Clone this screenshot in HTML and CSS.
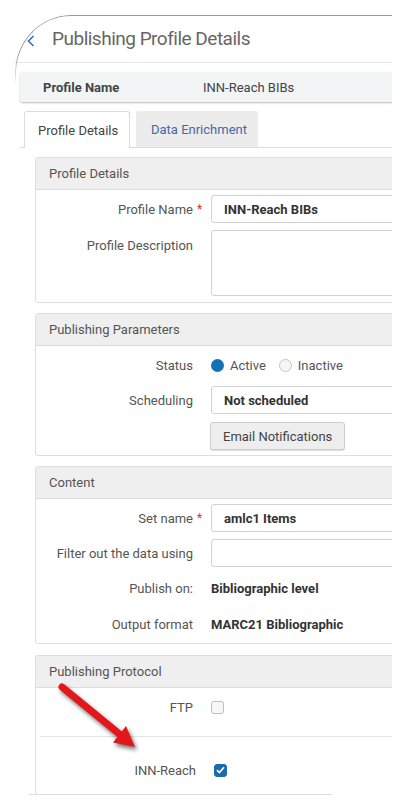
FILE: index.html
```html
<!DOCTYPE html>
<html lang="en">
<head>
<meta charset="utf-8">
<title>Publishing Profile Details</title>
<link rel="stylesheet" href="styles.css">
</head>
<body>
<div class="sheet">
  <header class="page-header">
    <svg class="back" width="8" height="12" viewBox="0 0 8 12"><path d="M6.5 1 L1.5 6 L6.5 11" fill="none" stroke="#2b72b8" stroke-width="1.6"/></svg>
    <h1 class="title">Publishing Profile Details</h1>
  </header>

  <div class="summary">
    <span class="summary-label">Profile Name</span>
    <span class="summary-value">INN-Reach BIBs</span>
  </div>

  <nav class="tabs">
    <span class="tab tab-active">Profile Details</span>
    <span class="tab tab-idle">Data Enrichment</span>
  </nav>

  <section class="panel">
    <div class="panel-head">Profile Details</div>
    <div class="panel-body">
      <div class="field">
        <span class="label">Profile Name</span><span class="req">*</span>
        <div class="input strong">INN-Reach BIBs</div>
      </div>
      <div class="field field-top">
        <span class="label">Profile Description</span><span class="req"></span>
        <div class="input textarea"></div>
      </div>
    </div>
  </section>

  <section class="panel">
    <div class="panel-head">Publishing Parameters</div>
    <div class="panel-body panel-body-params">
      <div class="field">
        <span class="label">Status</span><span class="req"></span>
        <div class="radios">
          <span class="radio radio-on"></span><span class="radio-text">Active</span>
          <span class="radio radio-off"></span><span class="radio-text">Inactive</span>
        </div>
      </div>
      <div class="field">
        <span class="label">Scheduling</span><span class="req"></span>
        <div class="input strong">Not scheduled</div>
      </div>
      <div class="field field-button">
        <span class="label"></span><span class="req"></span>
        <div><span class="button">Email Notifications</span></div>
      </div>
    </div>
  </section>

  <section class="panel">
    <div class="panel-head">Content</div>
    <div class="panel-body panel-body-content">
      <div class="field">
        <span class="label">Set name</span><span class="req">*</span>
        <div class="input strong">amlc1 Items</div>
      </div>
      <div class="field">
        <span class="label">Filter out the data using</span><span class="req"></span>
        <div class="input"></div>
      </div>
      <div class="field field-text">
        <span class="label">Publish on:</span><span class="req"></span>
        <span class="value">Bibliographic level</span>
      </div>
      <div class="field field-text">
        <span class="label">Output format</span><span class="req"></span>
        <span class="value">MARC21 Bibliographic</span>
      </div>
    </div>
  </section>

  <section class="panel panel-last">
    <div class="panel-head">Publishing Protocol</div>
    <div class="panel-body">
      <div class="field">
        <span class="label">FTP</span><span class="req"></span>
        <div><span class="check"></span></div>
      </div>
      <div class="separator"></div>
      <div class="field field-shift">
        <span class="label">INN-Reach</span><span class="req"></span>
        <div><span class="check check-on"><svg width="9" height="8" viewBox="0 0 9 8"><path d="M1 4.2 L3.4 6.5 L8 1.2" fill="none" stroke="#fff" stroke-width="1.6"/></svg></span></div>
      </div>
    </div>
  </section>

  <svg class="arrow" width="100" height="82" viewBox="0 0 100 82">
    <line x1="12" y1="9" x2="70" y2="56.5" stroke="#e3161b" stroke-width="7" stroke-linecap="round"/>
    <polygon points="85,69 63,64.5 76,48" fill="#e3161b"/>
  </svg>
</div>
</body>
</html>
```

FILE: styles.css
```css
* { box-sizing: border-box; }

html, body {
  margin: 0;
  padding: 0;
  background: #ffffff;
}

body {
  font-family: Roboto, "Liberation Sans", Arial, sans-serif;
  font-size: 13px;
  color: #555;
}

.sheet {
  position: relative;
  width: 392px;
  height: 795px;
  padding-top: 15px;
  overflow: hidden;
}

.sheet::before {
  content: "";
  position: absolute;
  left: 15px;
  top: 15px;
  width: 420px;
  height: 68px;
  border-top: 1px solid #9a9a9a;
  border-left: 1px solid #9a9a9a;
  border-top-left-radius: 56px 58px;
  -webkit-mask-image: linear-gradient(to bottom, #000 60%, transparent 100%);
  mask-image: linear-gradient(to bottom, #000 60%, transparent 100%);
  pointer-events: none;
}

.sheet::after {
  content: "";
  position: absolute;
  left: 29px;
  bottom: 0;
  width: 303px;
  height: 1px;
  background: #dcdcdc;
}

/* header */
.page-header {
  display: flex;
  align-items: center;
  height: 48px;
  margin-left: 15px;
  margin-right: -20px;
  padding-left: 12px;
  border-bottom: 1px solid #e8e8e8;
}

.back {
  display: block;
  margin-top: 4px;
}

.title {
  margin: 0 0 0 17px;
  font-weight: 400;
  font-size: 19px;
  color: #666;
  letter-spacing: -0.5px;
}

/* summary bar */
.summary {
  display: flex;
  align-items: center;
  height: 30px;
  margin: 9px -20px 0 20px;
  padding-left: 23px;
  background: #f2f5f6;
  border-radius: 3px;
  box-shadow: 0 1px 2px rgba(0, 0, 0, 0.28);
  color: #444;
}

.summary-label {
  width: 160px;
  font-weight: 700;
}

/* tabs */
.tabs {
  display: flex;
  gap: 6px;
  margin: 9px -20px 0 20px;
  padding-left: 4px;
  border-bottom: 1px solid #dcdcdc;
}

.tab {
  display: flex;
  align-items: center;
  height: 36px;
  border-radius: 3px 3px 0 0;
}

.tab-active {
  width: 106px;
  padding-left: 13px;
  background: #fff;
  border: 1px solid #dcdcdc;
  border-bottom: none;
  margin-bottom: -1px;
  height: 37px;
  color: #444;
}

.tab-idle {
  width: 122px;
  padding-left: 15px;
  background: #ececec;
  color: #4a66a6;
}

/* panels */
.panel {
  margin: 10px -40px 0 35px;
  border: 1px solid #dedede;
  border-radius: 3px;
  background: #fff;
}

.tabs + .panel {
  margin-top: 9px;
}

.panel-head {
  height: 32px;
  line-height: 31px;
  padding-left: 13px;
  background: #efefef;
  border-bottom: 1px solid #dcdcdc;
  color: #555;
}

.panel-body {
  display: flex;
  flex-direction: column;
  gap: 7px;
  padding: 5px 0 6px;
}

.panel-body-params {
  padding-bottom: 5px;
}

.panel-body-content {
  padding-bottom: 4px;
}

.panel-last {
  height: 400px;
  margin-top: 11px;
}

.field {
  display: grid;
  grid-template-columns: 157px 18px 1fr;
  align-items: center;
  min-height: 28px;
}

.field-top {
  align-items: start;
}

.field-top .label {
  padding-top: 8px;
}

.field-button {
  margin-top: 1px;
}

.field-text {
  min-height: 29px;
}

.field-shift {
  margin-left: 3px;
}

.label {
  text-align: right;
  color: #555;
  white-space: nowrap;
}

.req {
  padding-left: 4px;
  color: #e03030;
  font-size: 12px;
  align-self: center;
}

.input {
  height: 28px;
  display: flex;
  align-items: center;
  padding-left: 12px;
  border: 1px solid #d2d2d2;
  border-radius: 3px;
  background: #fff;
  color: #333;
}

.strong, .value {
  font-weight: 700;
  color: #333;
}

.textarea {
  height: 66px;
}

/* radios */
.radios {
  display: flex;
  align-items: center;
}

.radio {
  width: 13px;
  height: 13px;
  border-radius: 50%;
}

.radio-on {
  background: #1670b4;
}

.radio-off {
  margin-left: 13px;
  border: 1px solid #c4c4c4;
  background: #f6f6f6;
}

.radio-text {
  margin-left: 6px;
  color: #555;
}

/* button */
.button {
  display: inline-flex;
  align-items: center;
  height: 28px;
  margin-left: -1px;
  padding: 0 12px;
  background: #eeeeee;
  border: 1px solid #cdcdcd;
  border-radius: 3px;
  box-shadow: 0 1px 1px rgba(0, 0, 0, 0.15);
  color: #444;
}

/* checkboxes */
.check {
  display: flex;
  align-items: center;
  justify-content: center;
  width: 13px;
  height: 13px;
  border: 1px solid #c0c0c0;
  border-radius: 3px;
  background: #f7f7f7;
}

.check-on {
  border-color: #1a6cae;
  background: #1a6cae;
}

.separator {
  height: 1px;
  margin: 8px 0 12px 4px;
  background: #e4e4e4;
}

/* annotation arrow */
.arrow {
  position: absolute;
  left: 50px;
  top: 678px;
  filter: drop-shadow(2px 3px 2px rgba(0, 0, 0, 0.55));
}
```
